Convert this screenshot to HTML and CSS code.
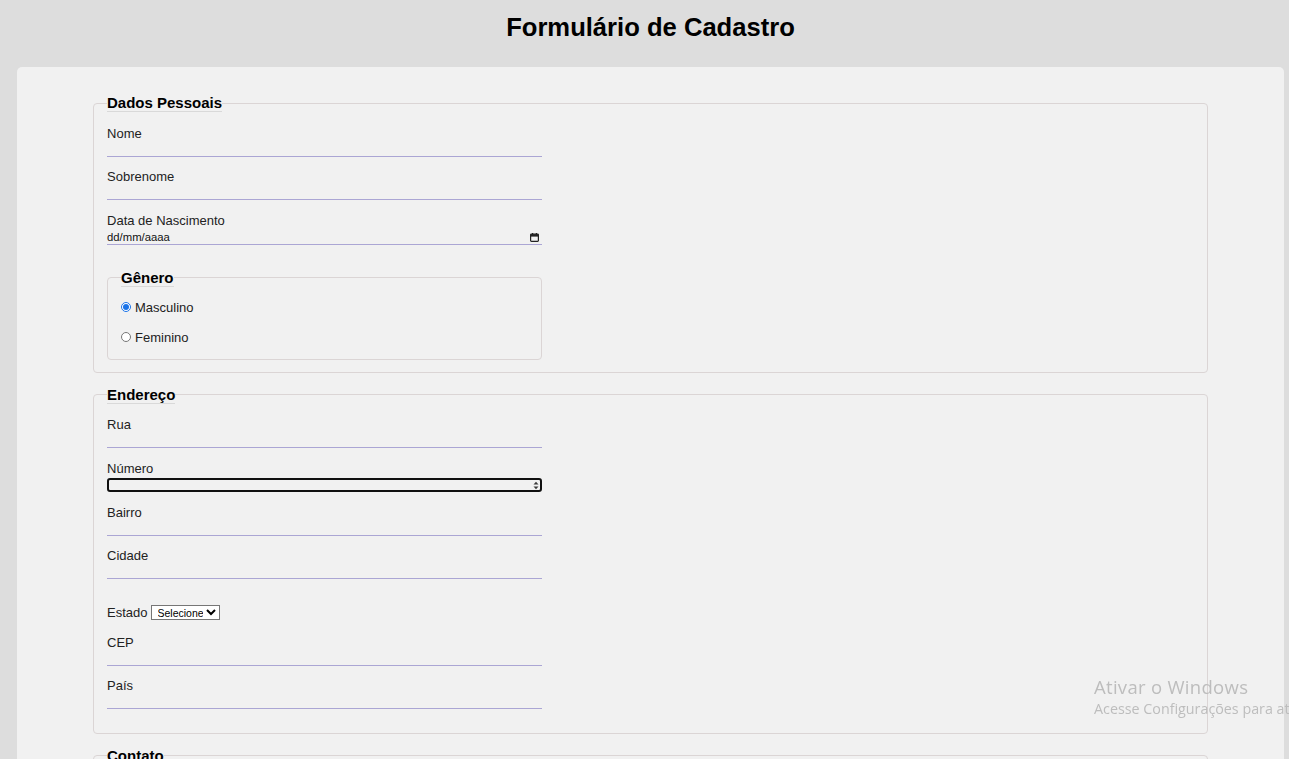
FILE: index.html
```html
<!DOCTYPE html>
<html lang="pt-BR">
<head>
<meta charset="utf-8">
<title>Formulário de Cadastro</title>
<link rel="stylesheet" href="styles.css">
</head>
<body>
<h1 class="title">Formulário de Cadastro</h1>
<form class="card">
  <fieldset class="section">
    <legend class="legend">Dados Pessoais</legend>
    <label class="field-label" for="nome">Nome</label>
    <input class="line-input" type="text" id="nome">
    <label class="field-label" for="sobrenome">Sobrenome</label>
    <input class="line-input" type="text" id="sobrenome">
    <label class="field-label" for="nasc">Data de Nascimento</label>
    <div class="date-input" id="nasc">
      <span class="date-text">dd/mm/aaaa</span>
      <svg class="cal-icon" width="9" height="9" viewBox="0 0 9 9" aria-hidden="true">
        <rect x="2" y="0" width="1.2" height="2" fill="#222"/>
        <rect x="5.8" y="0" width="1.2" height="2" fill="#222"/>
        <rect x="0.6" y="1.2" width="7.8" height="7.2" rx="0.8" fill="none" stroke="#222" stroke-width="1.2"/>
        <rect x="0.6" y="1.2" width="7.8" height="2.4" fill="#222"/>
      </svg>
    </div>
    <fieldset class="sub">
      <legend class="legend">Gênero</legend>
      <label class="radio-row"><input class="radio" type="radio" name="genero" checked> Masculino</label>
      <label class="radio-row"><input class="radio" type="radio" name="genero"> Feminino</label>
    </fieldset>
  </fieldset>

  <fieldset class="section section-last-input">
    <legend class="legend">Endereço</legend>
    <label class="field-label" for="rua">Rua</label>
    <input class="line-input" type="text" id="rua">
    <label class="field-label" for="numero">Número</label>
    <div class="num-box">
      <input class="num-input" type="text" id="numero">
      <svg class="spin" width="6" height="9" viewBox="0 0 6 9" aria-hidden="true">
        <polygon points="0.5,3.6 3,0.8 5.5,3.6" fill="#3a3a3a"/>
        <polygon points="0.5,5.4 3,8.2 5.5,5.4" fill="#3a3a3a"/>
      </svg>
    </div>
    <label class="field-label" for="bairro">Bairro</label>
    <input class="line-input" type="text" id="bairro">
    <label class="field-label" for="cidade">Cidade</label>
    <input class="line-input" type="text" id="cidade">
    <div class="inline-field">
      <label class="inline-label" for="estado">Estado</label>
      <select class="select" id="estado">
        <option>Selecione</option>
        <option>SP</option>
        <option>RJ</option>
        <option>MG</option>
      </select>
    </div>
    <label class="field-label" for="cep">CEP</label>
    <input class="line-input" type="text" id="cep">
    <label class="field-label" for="pais">País</label>
    <input class="line-input" type="text" id="pais">
  </fieldset>

  <fieldset class="section section-last-input">
    <legend class="legend">Contato</legend>
    <label class="field-label" for="email">E-mail</label>
    <input class="line-input" type="text" id="email">
    <label class="field-label" for="tel">Telefone</label>
    <input class="line-input" type="text" id="tel">
  </fieldset>
</form>
<div class="watermark">
  <div class="wm-title">Ativar o Windows</div>
  <div class="wm-sub">Acesse Configurações para ativar o Windows.</div>
</div>
</body>
</html>
```
FILE: styles.css
```css
html {
  scrollbar-width: none;
  overflow-x: hidden;
}
html::-webkit-scrollbar { display: none; }

body {
  margin: 0;
  padding: 0 5px 0 17px;
  background: #dddddd;
  font-family: "Liberation Sans", Arial, sans-serif;
  color: #222;
}

.title {
  margin: 0;
  padding: 12px 0 25px;
  font-size: 25.6px;
  line-height: 30px;
  font-weight: bold;
  text-align: center;
  color: #000;
}

.card {
  background: #f1f1f1;
  border-radius: 5px 5px 0 0;
  padding: 27px 0 40px;
  min-height: 800px;
}

.section {
  box-sizing: border-box;
  width: 88%;
  min-width: 0;
  margin: 0 auto 13px;
  padding: 13.5px 13px 12px;
  border: 1px solid #dbd5d5;
  border-radius: 4px;
}

.section-last-input {
  padding-bottom: 11px;
}

.legend {
  padding: 0;
  font-size: 15px;
  line-height: 17px;
  font-weight: bold;
  color: #000;
  border-bottom: 1px solid #d9d9d9;
}

.field-label {
  display: block;
  font-size: 13px;
  line-height: 15px;
  color: #222;
}

.line-input {
  display: block;
  box-sizing: border-box;
  width: 435px;
  height: 16px;
  margin: 0 0 12.5px;
  padding: 0;
  border: 0;
  border-bottom: 1px solid #aba6d4;
  background: transparent;
  font: 11px "Liberation Sans", Arial, sans-serif;
  outline: none;
}

.date-input {
  box-sizing: border-box;
  width: 435px;
  height: 17px;
  margin: 0 0 12.5px;
  padding: 0 3px 0 0;
  display: flex;
  align-items: flex-end;
  justify-content: space-between;
  border-bottom: 1px solid #aba6d4;
  font-size: 11.3px;
  line-height: 13px;
  color: #111;
}

.cal-icon {
  display: block;
  margin-bottom: 2px;
}

.sub {
  box-sizing: border-box;
  width: 435px;
  min-width: 0;
  margin: 24px 0 0;
  padding: 12.5px 13px 13.5px;
  border: 1px solid #dbd5d5;
  border-radius: 4px;
}

.radio-row {
  display: flex;
  align-items: center;
  height: 16px;
  font-size: 13px;
  line-height: 15px;
  color: #222;
}

.radio-row + .radio-row {
  margin-top: 14px;
}

.radio {
  width: 10px;
  height: 10px;
  margin: 0 4px 0 0;
  accent-color: #1a73e8;
}

.num-box {
  box-sizing: border-box;
  width: 435px;
  height: 14px;
  margin: 2.5px 0 12.5px;
  padding: 0 1px 0 2px;
  display: flex;
  align-items: center;
  border: 2px solid #101010;
  border-radius: 3px;
}

.num-input {
  flex: 1;
  min-width: 0;
  height: 100%;
  padding: 0;
  border: 0;
  background: transparent;
  font: 11px "Liberation Sans", Arial, sans-serif;
  outline: none;
}

.spin {
  display: block;
  flex: none;
}

.inline-field {
  display: flex;
  align-items: center;
  height: 21px;
  margin: 22.5px 0 12px;
}

.inline-label {
  font-size: 13px;
  line-height: 15px;
  color: #222;
  margin-right: 3px;
}

.select {
  box-sizing: border-box;
  width: 69px;
  height: 15px;
  padding: 0 0 0 2px;
  border: 1px solid #767676;
  border-radius: 0;
  background: #fff;
  color: #000;
  font: 10.5px "Liberation Sans", Arial, sans-serif;
}

.watermark {
  position: fixed;
  left: 1094px;
  top: 676px;
  white-space: nowrap;
  font-family: "Open Sans", "Noto Sans", sans-serif;
  color: #bdbdbd;
  pointer-events: none;
}

.wm-title {
  font-size: 18.5px;
  line-height: 22px;
  letter-spacing: 0.3px;
}

.wm-sub {
  font-size: 14.3px;
  line-height: 22px;
}
```
